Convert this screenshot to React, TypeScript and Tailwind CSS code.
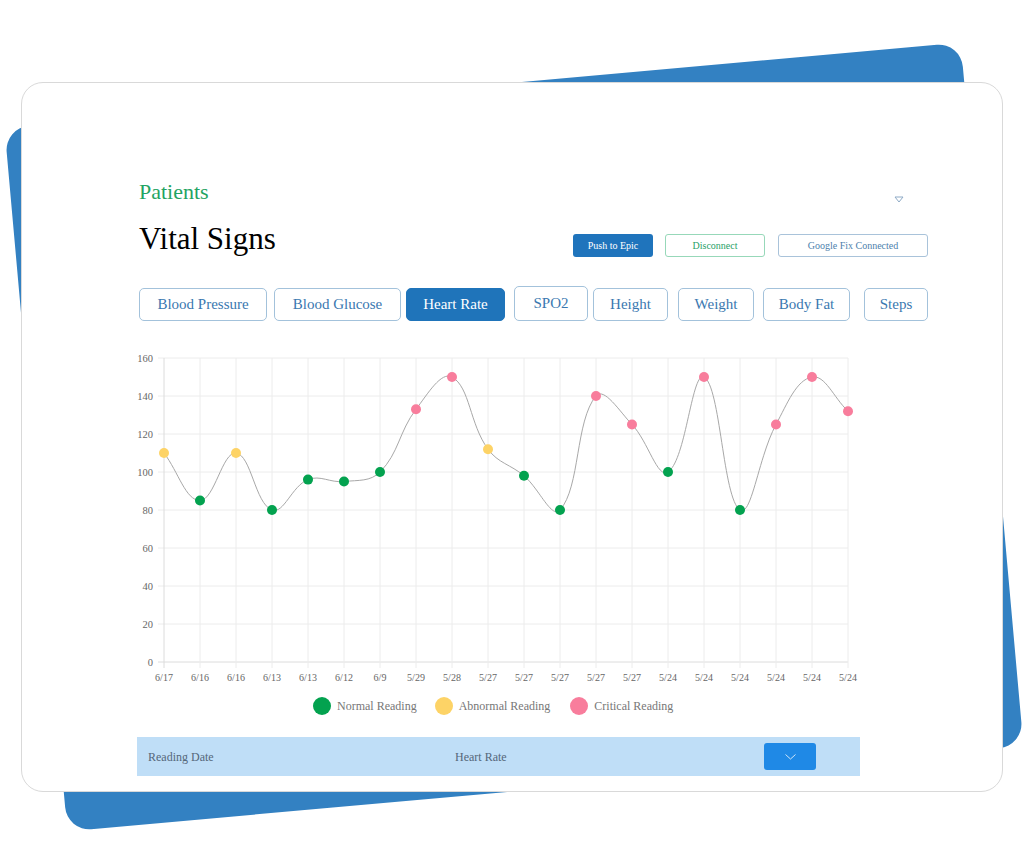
import React from 'react';

// ─── Data ───────────────────────────────
type Level = 'normal' | 'abnormal' | 'critical';

const LABELS = ['6/17', '6/16', '6/16', '6/13', '6/13', '6/12', '6/9', '5/29', '5/28', '5/27', '5/27', '5/27', '5/27', '5/27', '5/24', '5/24', '5/24', '5/24', '5/24', '5/24'];
const VALUES = [110, 85, 110, 80, 96, 95, 100, 133, 150, 112, 98, 80, 140, 125, 100, 150, 80, 125, 150, 132];

const COLORS: Record<Level, string> = {
	normal: '#03a24f',
	abnormal: '#fdd366',
	critical: '#f87d9c',
};

function levelOf(v: number): Level {
	if (v > 120) return 'critical';
	if (v > 100) return 'abnormal';
	return 'normal';
}

const TABS = [
	{ label: 'Blood Pressure', cls: 'ml-[2px] w-[128px] h-[33px]' },
	{ label: 'Blood Glucose', cls: 'ml-[7px] w-[127px] h-[33px]' },
	{ label: 'Heart Rate', cls: 'ml-[5px] w-[99px] h-[33px]', active: true },
	{ label: 'SPO2', cls: 'ml-[9px] w-[74px] h-[35px]' },
	{ label: 'Height', cls: 'ml-[5px] w-[75px] h-[33px]' },
	{ label: 'Weight', cls: 'ml-[10px] w-[76px] h-[33px]' },
	{ label: 'Body Fat', cls: 'ml-[9px] w-[87px] h-[33px]' },
	{ label: 'Steps', cls: 'ml-[14px] w-[64px] h-[33px]' },
];

// ─── Chart geometry ─────────────────────
const PLOT_L = 27;
const PLOT_R = 711;
const Y0 = 316;
const PX_PER_UNIT = 1.9;
const STEP = (PLOT_R - PLOT_L) / (VALUES.length - 1);

const pts = VALUES.map((v, i) => ({ x: PLOT_L + STEP * i, y: Y0 - v * PX_PER_UNIT }));

// chart.js-like spline (tension 0.4)
function buildPath(p: { x: number; y: number }[], t = 0.4) {
	const ctrl = p.map((cur, i) => {
		const prev = p[i - 1] ?? cur;
		const next = p[i + 1] ?? cur;
		const d01 = Math.hypot(cur.x - prev.x, cur.y - prev.y);
		const d12 = Math.hypot(next.x - cur.x, next.y - cur.y);
		const s01 = d01 / (d01 + d12 || 1);
		const s12 = d12 / (d01 + d12 || 1);
		const fa = t * s01;
		const fb = t * s12;
		return {
			px: cur.x - fa * (next.x - prev.x),
			py: cur.y - fa * (next.y - prev.y),
			nx: cur.x + fb * (next.x - prev.x),
			ny: cur.y + fb * (next.y - prev.y),
		};
	});
	let d = `M${p[0].x},${p[0].y}`;
	for (let i = 1; i < p.length; i++) {
		d += ` C${ctrl[i - 1].nx},${ctrl[i - 1].ny} ${ctrl[i].px},${ctrl[i].py} ${p[i].x},${p[i].y}`;
	}
	return d;
}

function HeartRateChart() {
	const ticks = [0, 20, 40, 60, 80, 100, 120, 140, 160];
	return (
		<svg width="723" height="345" viewBox="0 0 723 345" className="block">
			{ticks.map((t) => {
				const y = Y0 - t * PX_PER_UNIT;
				return (
					<g key={t}>
						<line x1={21} x2={PLOT_R} y1={y} y2={y} stroke={t === 0 ? '#dcdcdc' : '#ececec'} strokeWidth="1" />
						<text x={16} y={y + 3.5} textAnchor="end" fontSize="10.5" fill="#666" fontFamily="'Liberation Serif', serif">
							{t}
						</text>
					</g>
				);
			})}
			{pts.map((p, i) => (
				<g key={i}>
					<line x1={p.x} x2={p.x} y1={Y0 - 160 * PX_PER_UNIT} y2={Y0 + 6} stroke={i === 0 ? '#dcdcdc' : '#ececec'} strokeWidth="1" />
					<text x={p.x} y={Y0 + 19} textAnchor="middle" fontSize="10" fill="#666" fontFamily="'Liberation Serif', serif">
						{LABELS[i]}
					</text>
				</g>
			))}
			<path d={buildPath(pts)} fill="none" stroke="#a8a8a8" strokeWidth="1" />
			{pts.map((p, i) => (
				<circle key={i} cx={p.x} cy={p.y} r="5" fill={COLORS[levelOf(VALUES[i])]} />
			))}
		</svg>
	);
}

function Legend() {
	const items: { label: string; color: string; cls: string }[] = [
		{ label: 'Normal Reading', color: COLORS.normal, cls: 'ml-[176px]' },
		{ label: 'Abnormal Reading', color: COLORS.abnormal, cls: 'ml-[18px]' },
		{ label: 'Critical Reading', color: COLORS.critical, cls: 'ml-[20px]' },
	];
	return (
		<div className="mt-[6px] flex h-[18px] items-center">
			{items.map((it) => (
				<div key={it.label} className={`flex items-center gap-[6px] ${it.cls}`}>
					<span className="h-[18px] w-[18px] rounded-full" style={{ backgroundColor: it.color }} />
					<span className="text-[12px] leading-none text-[#777]">{it.label}</span>
				</div>
			))}
		</div>
	);
}

export default function App() {
	return (
		<div className="relative h-[868px] w-[1024px] overflow-hidden bg-white" style={{ fontFamily: "'Liberation Serif', 'Times New Roman', serif" }}>
			{/* tilted backdrop */}
			<div className="absolute left-[34px] top-[84px] h-[706px] w-[960px] -rotate-[5.1deg] rounded-[24px] bg-[#3381c2]" />

			{/* card */}
			<div className="relative ml-[21px] mt-[82px] h-[710px] w-[982px] rounded-[22px] border border-[#d9d9d9] bg-white pl-[115px] pt-[95px]">
				<div className="w-[791px]">
					{/* header */}
					<div className="flex h-[28px] items-start justify-between">
						<span className="ml-[2px] text-[22px] leading-[28px] text-[#1fa463]">Patients</span>
						<svg width="10" height="7" viewBox="0 0 10 7" className="mr-[24px] mt-[18px]">
							<polygon points="1,1 9,1 5,6" fill="none" stroke="#8eaac6" strokeWidth="1" />
						</svg>
					</div>

					<div className="mt-[15px] flex h-[36px] items-start justify-between">
						<h1 className="ml-[2px] text-[31px] leading-[36px] text-black">Vital Signs</h1>
						<div className="mt-[13px] flex gap-[12px]">
							<button className="h-[23px] w-[80px] rounded-[3px] bg-[#1f74bc] text-[10px] text-white">Push to Epic</button>
							<button className="h-[23px] w-[100px] rounded-[3px] border border-[#97d8b9] bg-white text-[10px] text-[#2a9f68]">Disconnect</button>
							<button className="ml-[1px] h-[23px] w-[150px] rounded-[3px] border border-[#a9c3da] bg-white text-[10px] text-[#4d7fad]">Google Fix Connected</button>
						</div>
					</div>

					{/* tabs */}
					<div className="mt-[29px] flex h-[35px] items-end">
						{TABS.map((t) => (
							<button
								key={t.label}
								className={`${t.cls} rounded-[5px] border text-[15px] ${
									t.active ? 'border-[#1f74ba] bg-[#1f74ba] text-white' : 'border-[#a3c2db] bg-white text-[#3a78b0]'
								}`}
							>
								{t.label}
							</button>
						))}
					</div>

					{/* chart */}
					<div className="mt-[25px]">
						<HeartRateChart />
					</div>
					<Legend />

					{/* table header */}
					<div className="mt-[22px] flex h-[39px] w-[723px] items-center bg-[#bfdef7] text-[12px] text-[#55677a]">
						<span className="ml-[11px] w-[307px]">Reading Date</span>
						<span className="w-[309px]">Heart Rate</span>
						<button className="flex h-[27px] w-[52px] items-center justify-center rounded-[3px] bg-[#1f89e6]">
							<svg width="11" height="6" viewBox="0 0 11 6">
								<polyline points="0.5,0.5 5.5,5 10.5,0.5" fill="none" stroke="#cfe5f8" strokeWidth="1" />
							</svg>
						</button>
					</div>
				</div>
			</div>
		</div>
	);
}
